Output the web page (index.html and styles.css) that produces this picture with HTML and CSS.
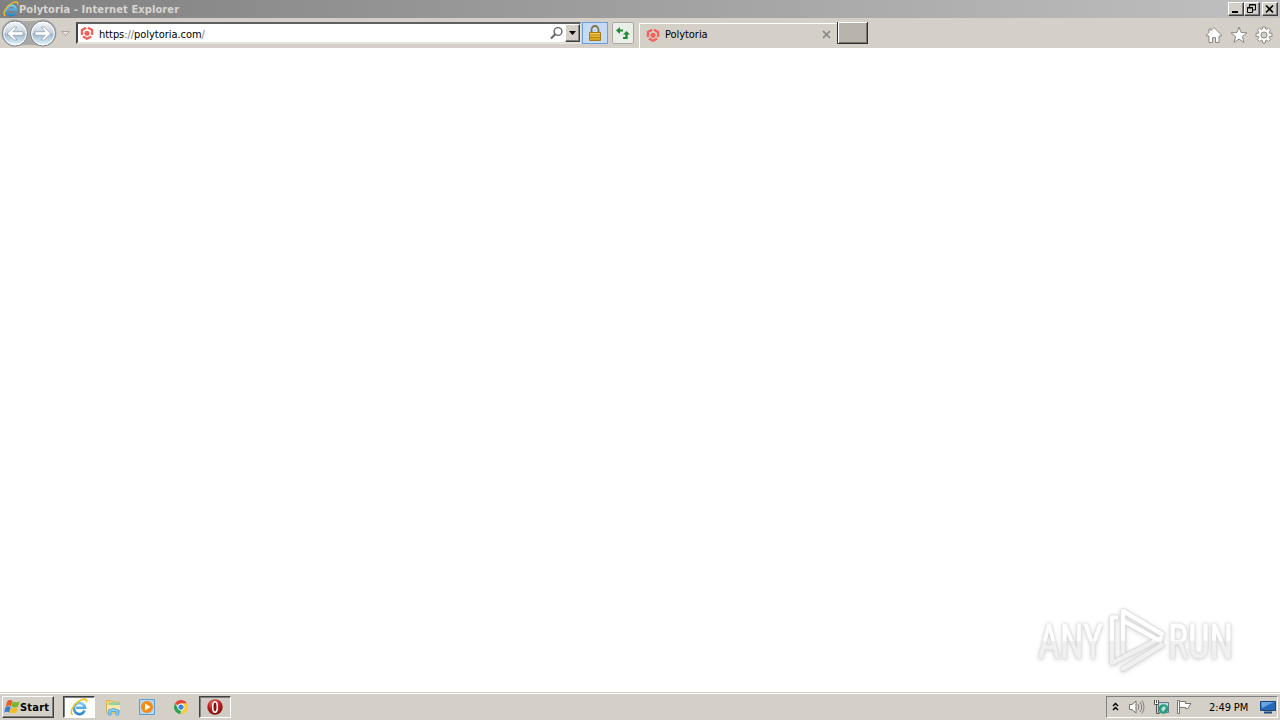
FILE: index.html
```html
<!DOCTYPE html>
<html lang="en">
<head>
    <meta charset="UTF-8">
    <title>Polytoria - Internet Explorer</title>
    <link rel="stylesheet" href="styles.css">
</head>
<body>
    <svg class="defs" aria-hidden="true">
        <defs>
            <linearGradient id="ball" x1="0" y1="0" x2="0" y2="1">
                <stop offset="0" stop-color="#f8fafc"/>
                <stop offset=".48" stop-color="#c6d2de"/>
                <stop offset=".52" stop-color="#9fb7cd"/>
                <stop offset="1" stop-color="#e8faff"/>
            </linearGradient>
            <linearGradient id="blue" x1="0" y1="0" x2="0" y2="1">
                <stop offset="0" stop-color="#72cdf5"/>
                <stop offset="1" stop-color="#2a85cf"/>
            </linearGradient>
            <linearGradient id="gold" x1="0" y1="0" x2="0" y2="1">
                <stop offset="0" stop-color="#f7d45c"/>
                <stop offset="1" stop-color="#d89a10"/>
            </linearGradient>
            <radialGradient id="red" cx=".4" cy=".25" r=".8">
                <stop offset="0" stop-color="#ec7468"/>
                <stop offset=".5" stop-color="#bd2020"/>
                <stop offset="1" stop-color="#7c0808"/>
            </radialGradient>
            <symbol id="ie" viewBox="0 0 16 16">
                <path d="M13 11.200A4.900 4.900 0 1 1 13.300 8.700H5.500" fill="none" stroke="url(#blue)" stroke-width="2.300"/>
                <path d="M2.400 14.800C-1 13 3 5.500 8.500 2.500 12 .4 15.300.2 14.700 3.700" fill="none" stroke="#f2bd20" stroke-width="1.400"/>
            </symbol>
            <symbol id="poly" viewBox="0 0 16 16">
                <path d="M7 1.900 2.200 4.600v5.600M9 1.900l4.800 2.700v5.600M3.200 12 8 14.600l4.800-2.600" fill="none" stroke="#f5605a" stroke-width="2.600"/>
                <circle cx="8" cy="8.200" r="2.900" fill="#f5605a"/>
            </symbol>
        </defs>
    </svg>

    <header class="titlebar">
        <svg class="title-icon" viewBox="0 0 16 16"><use href="#ie"/></svg>
        <span class="title-text">Polytoria - Internet Explorer</span>
        <div class="window-buttons">
            <span class="win-btn"><svg width="14" height="12"><path d="M3 9h6" stroke="#000" stroke-width="2"/></svg></span>
            <span class="win-btn"><svg width="14" height="12"><path d="M4.500 4V1.500h6V7H8M4 2h7" fill="none" stroke="#000"/><path d="M2.500 4.500h5v5h-5zM2 5h6" fill="none" stroke="#000"/></svg></span>
            <span class="win-btn close"><svg width="14" height="12"><path d="m3 2.500 7 7m0-7-7 7" stroke="#000" stroke-width="1.600"/></svg></span>
        </div>
    </header>

    <nav class="toolbar">
        <svg class="nav-buttons" width="76" height="30" viewBox="0 0 76 30">
            <path d="M15 1.500Q29 5 43 1.500a13.500 13.500 0 0 1 0 27Q29 25 15 28.500A13.500 13.500 0 0 1 15 1.500" fill="#aaa9a8"/>
            <circle cx="15" cy="15.500" r="12.500" fill="url(#ball)" stroke="#7d858e"/>
            <circle cx="43" cy="15.500" r="12.500" fill="url(#ball)" stroke="#7d858e"/>
            <circle cx="15" cy="15.500" r="11.300" fill="none" stroke="#fff"/>
            <circle cx="43" cy="15.500" r="11.300" fill="none" stroke="#fff"/>
            <path d="M7 15.500 14 9h3l-4 4.700H23v3.600H13l4 4.700h-3z" fill="#fff" stroke="#8b9aaa" stroke-width=".7"/>
            <path d="m51 15.500-7-6.500h-3l4 4.700H35v3.600h10L41 22h3z" fill="#fff" stroke="#8b9aaa" stroke-width=".7"/>
            <path d="M61.500 13.500h8l-4 4z" fill="#e7e3dd" stroke="#aaa69f"/>
        </svg>
        <div class="address">
            <svg class="favicon" width="14" height="14"><use href="#poly"/></svg>
            <span class="url">https<i>://</i>polytoria.com<i>/</i></span>
            <svg class="search" width="15" height="15"><circle cx="9" cy="5.500" r="3.900" fill="#fff" stroke="#666" stroke-width="1.400"/><path d="M6.200 8.300 2 12.500" stroke="#666" stroke-width="2"/></svg>
            <span class="dropdown"><svg width="7" height="4"><path d="M0 0h7L3.500 4z"/></svg></span>
        </div>
        <span class="tool lock">
            <svg width="16" height="17"><path d="M4.500 8V4.500a3.500 3.500 0 0 1 7 0V8" fill="none" stroke="#857448" stroke-width="1.800"/><path d="M2.500 7.500h11v8h-11z" fill="url(#gold)" stroke="#a87a14"/><path d="M3 10h10M3 12.500h10" stroke="#b98314"/></svg>
        </span>
        <span class="tool refresh">
            <svg width="16" height="16"><path d="M1 5.500 5 2v2.500h3v2H5V9z" fill="#218c32"/><path d="M15 9.500 11.500 6 8 9.500h2.300V12H8v2h4.700V9.500z" fill="#218c32"/></svg>
        </span>
        <div class="tab">
            <svg class="favicon" width="14" height="14"><use href="#poly"/></svg>
            <span>Polytoria</span>
            <svg class="tab-close" width="9" height="9"><path d="m1 1 7 7m0-7L1 8" stroke="#858585" stroke-width="1.700"/></svg>
        </div>
        <span class="new-tab"></span>
        <div class="commands">
            <svg width="18" height="18" viewBox="0 0 18 18"><path d="M9 1.500 16.500 9v1H14v6.500h-3.500v-5h-3v5H4V10H1.500V9L4 6.500V3h2v1.500z" fill="#fff" stroke="#8c8983"/></svg>
            <svg width="18" height="18" viewBox="0 0 18 18"><path d="m9 1 2.100 5.500 5.900.3-4.600 3.700 1.600 5.900L9 13.100l-5 3.300 1.600-5.900L1 6.800l5.900-.3z" fill="#fff" stroke="#8c8983"/></svg>
            <svg width="18" height="18" viewBox="0 0 18 18">
                <path d="M7.500 1h3v2l1.200.5L13.400 2l2.200 2.200-1.500 1.700.5 1.300H17v3.200h-2.400l-.5 1.300 1.500 1.700-2.200 2.200-1.700-1.500-1.200.5V17h-3v-2.400l-1.200-.5-1.700 1.500-2.200-2.200 1.500-1.700-.5-1.300H1V7.200h2.400l.5-1.300-1.500-1.700L4.600 2l1.700 1.500L7.500 3z" fill="#fff" stroke="#8c8983"/>
                <circle cx="9" cy="9" r="3" fill="#d4d0c8" stroke="#8c8983"/>
            </svg>
        </div>
    </nav>

    <main>
        <svg class="watermark" width="210" height="72" viewBox="0 0 210 72">
            <defs>
                <linearGradient id="mark" gradientUnits="userSpaceOnUse" x1="0" y1="0" x2="0" y2="72">
                    <stop offset=".52" stop-color="#fff"/>
                    <stop offset=".53" stop-color="#f0f0f0"/>
                </linearGradient>
            </defs>
            <text x="8" y="55" textLength="65" lengthAdjust="spacingAndGlyphs">ANY</text>
            <text x="138" y="55" textLength="65" lengthAdjust="spacingAndGlyphs">RUN</text>
            <path class="mark-line" d="M86 14.500h-4V60l49-25"/>
            <path class="mark-line" d="M93 49V8l39 23M94 18l36 20M93 66l39-24"/>
        </svg>
    </main>

    <footer class="taskbar">
        <div class="start">
            <svg width="16" height="16" viewBox="0 0 16 16">
                <path d="M3.400 2q3-2 5 0L7 7.300q-2-1.500-5.200 0z" fill="#e85b25"/>
                <path d="M8.800 2.500q3 1.500 7 0L14 7.500q-3 2-6.500.3z" fill="#79b82b"/>
                <path d="M1.500 8q3-1.500 5.200 0l-1.500 5.500q-2-1.500-5 0z" fill="#377fd0"/>
                <path d="M7.200 8.500q3 1.500 6.500 0l-1.500 5q-3 1.500-6.500 0z" fill="#f5bd22"/>
            </svg>
            <span>Start</span>
        </div>
        <div class="tasks">
            <span class="task active"><svg width="18" height="18" viewBox="0 0 16 16"><use href="#ie"/></svg></span>
            <span class="task">
                <svg width="17" height="17" viewBox="0 0 17 17"><path d="M1.500 3V1.500h5L8 3h6.500v11h-13z" fill="#f0d475" stroke="#d2b65a"/><path d="M4 3.500h10v4H4z" fill="#8dd3a5"/><path d="M2 6h13v5H2z" fill="#f8e8a5"/><path d="M3.500 16v-5q5-3 10 0v5h-2.500v-3.500H6V16z" fill="#8dcdf0" stroke="#60a9d5"/></svg>
            </span>
            <span class="task">
                <svg width="16" height="16"><path d="M.5.500h15v15H.5z" fill="#b4d8f4" stroke="#5c9fd4"/><circle cx="8" cy="8" r="6" fill="#f58b16"/><path d="m6 4.500 5.500 3.500L6 11.500z" fill="#fff"/></svg>
            </span>
            <span class="task">
                <svg width="14" height="14" viewBox="0 0 16 16"><path d="M8 8 1.100 4A8 8 0 0 1 15 4H8z" fill="#e24435"/><path d="M8 8 7.500 16A8 8 0 0 1 1.100 4l3.500 6z" fill="#2ba24c"/><path d="M8 4h7a8 8 0 0 1-7.500 12L11.500 10z" fill="#f9cc30"/><circle cx="8" cy="8" r="3.900" fill="#fff"/><circle cx="8" cy="8" r="3" fill="#3e80e4"/></svg>
            </span>
            <span class="task running">
                <svg width="16" height="16"><circle cx="8" cy="8" r="7.700" fill="url(#red)"/><ellipse cx="8" cy="8" rx="2.300" ry="5.200" fill="#8d1010" stroke="#fff" stroke-width="1.600"/></svg>
            </span>
        </div>
        <div class="tray">
            <svg class="chevrons" width="7" height="9"><path d="m1 4 2.500-2.500L6 4M1 8l2.500-2.500L6 8" fill="none" stroke="#000" stroke-width="1.500"/></svg>
            <svg class="speaker" width="17" height="16"><path d="M1.500 5.500H4L8 2v12l-4-3.500H1.500z" fill="#fff" stroke="#77736d"/><path d="M10 5q2 3 0 6M12 3q3.500 5 0 10M14 1.500q4 6.500 0 13" fill="none" stroke="#85817a"/></svg>
            <svg class="network" width="17" height="17"><path d="M5.500 3.500h10v10h-10z" fill="#b5dce2" stroke="#6a7c80"/><circle cx="10.500" cy="10" r="4.800" fill="#279a84"/><path d="m8 10 3-3 2 2-3 4z" fill="#bce5d5"/><path d="M1.500 1.500h4v4h-4z" fill="#fff"/><path d="M1.500 1v4.500h4V1M3.500 1v3M3.500 5v9.500h3" fill="none" stroke="#555"/></svg>
            <svg class="flag" width="16" height="16"><path d="M1.500 1.500h2v13h-2z" fill="#fff" stroke="#77736d"/><path d="M3.500 2.500h6v2H15l-2 3-1 2H9.500v-1h-6z" fill="#fff" stroke="#77736d"/></svg>
            <span class="clock">2:49 PM</span>
            <svg class="desktop" width="16" height="14"><path d="M.5 1.500h15v9H.5z" fill="#2868b8" stroke="#16467c"/><path d="M1 2h13L2 8z" fill="#68a4e1"/><path d="M4 12.500h8" stroke="#174a83" stroke-width="2"/></svg>
        </div>
    </footer>
</body>
</html>
```
FILE: styles.css
```css
* {
    box-sizing: border-box;
}

body {
    margin: 0;
    height: 720px;
    display: flex;
    flex-direction: column;
    overflow: hidden;
    background: #fff;
    color: #000;
    font-family: "DejaVu Sans Condensed", "DejaVu Sans", sans-serif;
    font-size: 11px;
    font-stretch: condensed;
}

svg {
    display: block;
    flex-shrink: 0;
}

.defs {
    position: absolute;
    width: 0;
    height: 0;
}

.titlebar {
    height: 18px;
    display: flex;
    align-items: center;
    padding: 0 2px 0 3px;
    background: linear-gradient(to right, #808080, #c0c0c0);
    color: #d8d5cf;
}

.title-icon {
    width: 16px;
    height: 16px;
}

.title-text {
    font-weight: bold;
    white-space: nowrap;
    letter-spacing: 0.1px;
}

.window-buttons {
    display: flex;
    margin-left: auto;
}

.win-btn {
    width: 16px;
    height: 14px;
    background: #d4d0c8;
    border: 1px solid;
    border-color: #fff #404040 #404040 #fff;
    box-shadow: inset -1px -1px #808080;
}

.close {
    margin-left: 2px;
}

.toolbar {
    height: 30px;
    display: flex;
    align-items: flex-start;
    background: #d4d0c8;
}

.address {
    width: 505px;
    height: 22px;
    margin-top: 4px;
    display: flex;
    align-items: center;
    padding: 0 0 0 2px;
    background: #fff;
    border: 2px solid;
    border-color: #606060 #e5e2dc #e5e2dc #404040;
    border-right-width: 1px;
}

.url {
    margin-left: 5px;
    padding-top: 2px;
    letter-spacing: -0.05px;
}

.url i {
    color: #777;
    font-style: normal;
}

.search {
    margin-left: auto;
    margin-right: 1px;
}

.dropdown {
    width: 15px;
    height: 18px;
    display: grid;
    place-items: center;
    background: #d4d0c8;
    border: 1px solid;
    border-color: #fff #404040 #404040 #fff;
    box-shadow: inset -1px -1px #808080;
}

.tool {
    display: grid;
    place-items: center;
    height: 22px;
    margin-top: 4px;
}

.lock {
    width: 26px;
    margin-left: 1px;
    background: #c5dbf5;
    border: 1px solid #6c9fdb;
}

.refresh {
    width: 22px;
    margin-left: 4px;
    background: #e9eee8;
    border: 1px solid #aaa9a5;
    border-radius: 2px;
}

.tab {
    width: 198px;
    height: 25px;
    margin: 5px 0 0 5px;
    display: flex;
    align-items: center;
    padding: 0 6px 3px;
    border-top: 1px solid #fff;
    border-left: 1px solid #fff;
}

.tab span {
    margin-left: 5px;
    letter-spacing: -0.05px;
}

.tab-close {
    margin-left: auto;
}

.new-tab {
    width: 31px;
    height: 22px;
    margin-top: 4px;
    background: #b8b4ac;
    border: solid #303030;
    border-width: 0 1px 1px;
    box-shadow: inset 1px 1px #fff, inset -1px -1px #77736d;
}

.commands {
    display: flex;
    gap: 7px;
    margin: 8px 7px 0 auto;
}

main {
    flex: 1;
    display: flex;
    align-items: flex-end;
    justify-content: flex-end;
    padding: 0 40px 17px 0;
}

.watermark {
    overflow: visible;
    filter: drop-shadow(0 0 1px #ccc) drop-shadow(0 1px 2px #ddd);
}

.watermark text {
    font-family: Roboto, sans-serif;
    font-size: 49px;
    fill: url(#mark);
    stroke: url(#mark);
    stroke-width: 0.8px;
}

.mark-line {
    fill: none;
    stroke: url(#mark);
    stroke-width: 4.5px;
    stroke-linejoin: round;
    stroke-linecap: round;
    filter: drop-shadow(0 0 0.5px #ccc);
}

.taskbar {
    height: 28px;
    display: flex;
    align-items: center;
    padding: 1px 2px 0;
    background: #d4d0c8;
    border-top: 1px solid #d4d0c8;
    box-shadow: inset 0 1px #fff;
}

.start {
    width: 52px;
    height: 22px;
    display: flex;
    align-items: center;
    padding-left: 1px;
    font-weight: bold;
    border: 1px solid;
    border-color: #fff #404040 #404040 #fff;
    box-shadow: inset -1px -1px #808080;
}

.start span {
    letter-spacing: 0.2px;
}

.tasks {
    display: flex;
    gap: 2px;
    margin-left: 9px;
}

.task {
    width: 32px;
    height: 22px;
    display: grid;
    place-items: center;
}

.active,
.running {
    border: 1px solid;
    border-color: #404040 #fff #fff #404040;
    box-shadow: inset 1px 1px #808080;
}

.active {
    background: #fff;
}

.running {
    background: #d0ccc5;
}

.tray {
    width: 172px;
    height: 22px;
    margin-left: auto;
    display: flex;
    align-items: center;
    border: 1px solid;
    border-color: #808080 #fff #fff #808080;
}

.chevrons {
    margin-left: 5px;
    margin-bottom: 2px;
}

.speaker {
    margin-left: 9px;
}

.network {
    margin-left: 8px;
}

.flag {
    margin-left: 6px;
}

.clock {
    margin-left: 17px;
    white-space: nowrap;
    letter-spacing: -0.1px;
}

.desktop {
    margin-left: auto;
    margin-right: 1px;
}
```
